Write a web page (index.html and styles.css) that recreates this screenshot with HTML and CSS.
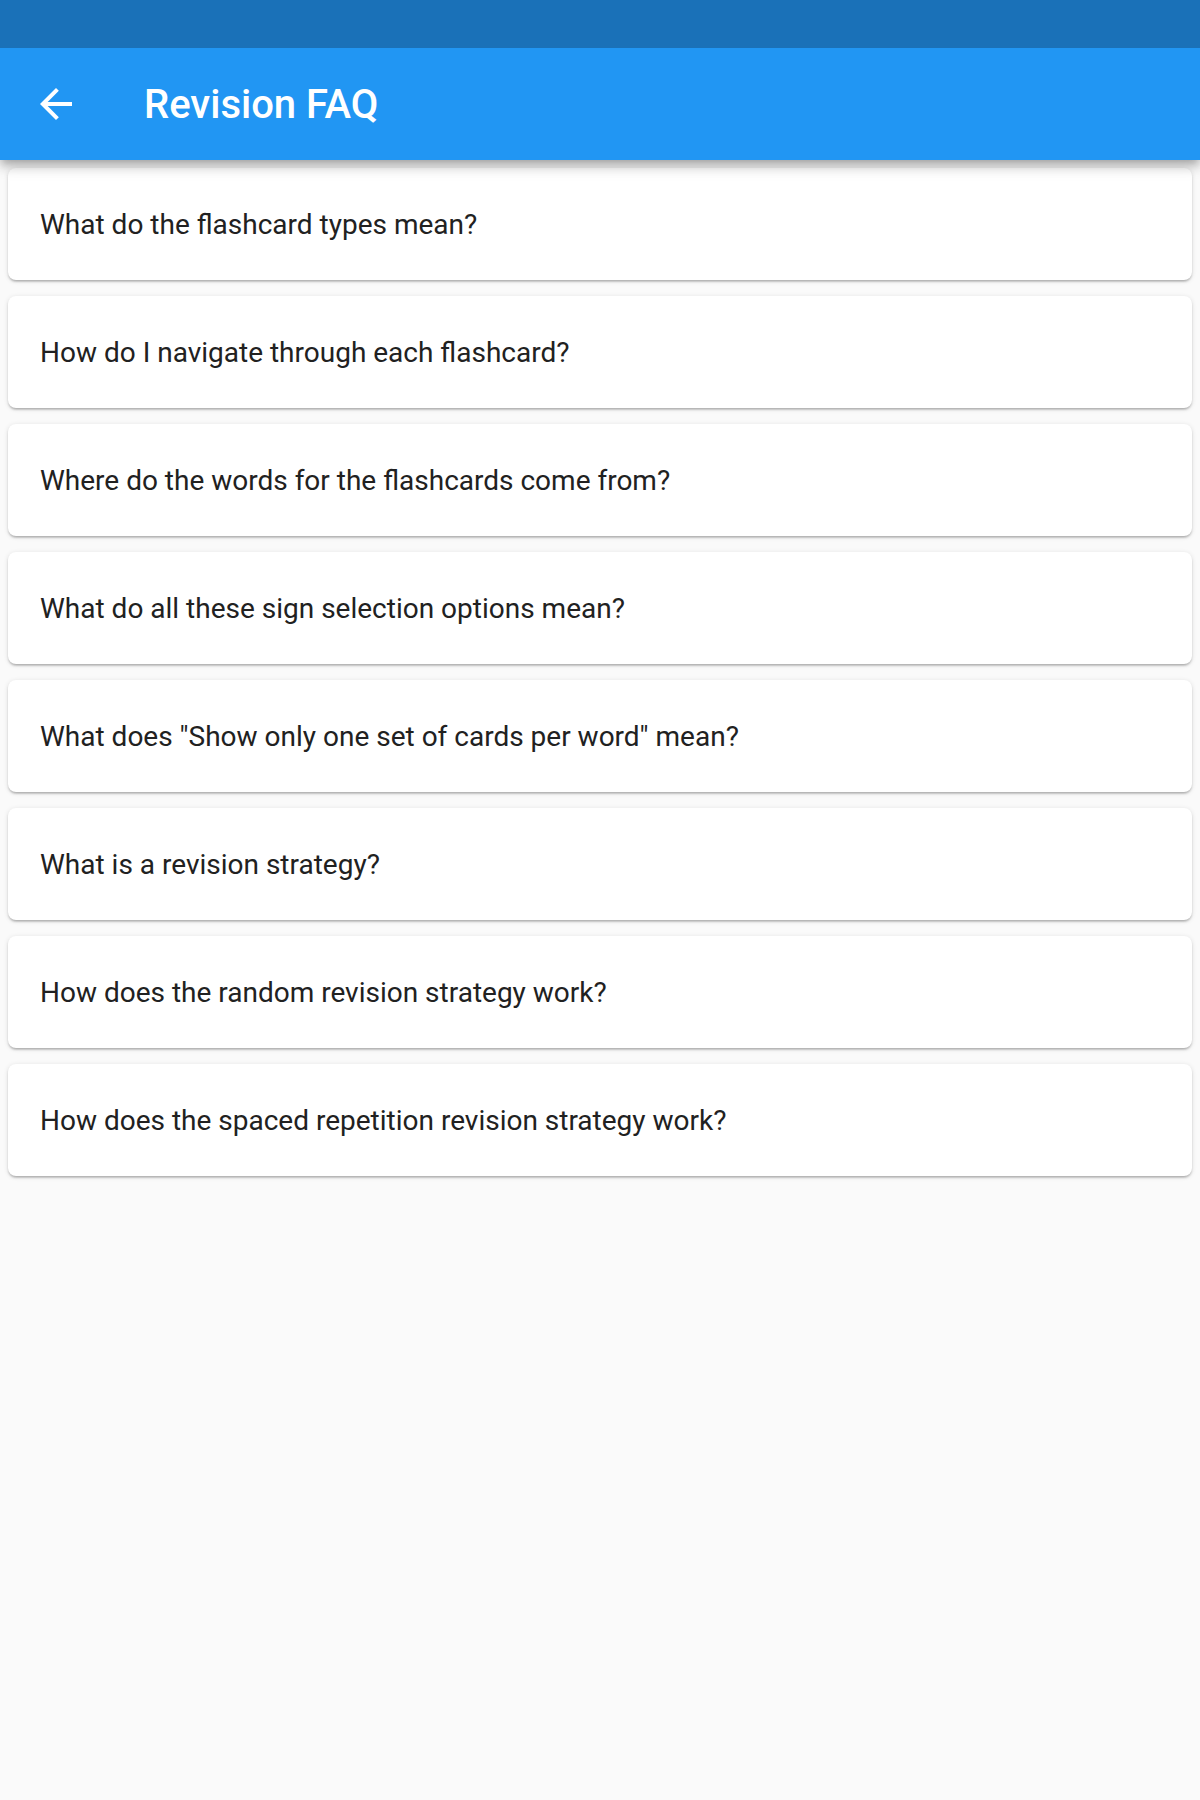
FILE: index.html
```html
<!DOCTYPE html>
<html lang="en">
<head>
<meta charset="utf-8">
<title>Revision FAQ</title>
<link rel="stylesheet" href="styles.css">
</head>
<body>
<header class="appbar">
  <div class="statusbar"></div>
  <div class="toolbar">
    <svg class="back" viewBox="0 0 24 24" width="48" height="48" aria-hidden="true">
      <path d="M20 11H7.83l5.59-5.59L12 4l-8 8 8 8 1.41-1.41L7.83 13H20v-2z" fill="#ffffff"/>
    </svg>
    <h1 class="title">Revision FAQ</h1>
  </div>
</header>
<main class="list">
  <div class="card">What do the flashcard types mean?</div>
  <div class="card">How do I navigate through each flashcard?</div>
  <div class="card">Where do the words for the flashcards come from?</div>
  <div class="card">What do all these sign selection options mean?</div>
  <div class="card">What does "Show only one set of cards per word" mean?</div>
  <div class="card">What is a revision strategy?</div>
  <div class="card">How does the random revision strategy work?</div>
  <div class="card">How does the spaced repetition revision strategy work?</div>
</main>
</body>
</html>
```
FILE: styles.css
```css
html, body {
  margin: 0;
  padding: 0;
  background: #fafafa;
  font-family: Roboto, "Noto Sans", "Liberation Sans", sans-serif;
}
body {
  min-height: 1800px;
}
.appbar {
  position: relative;
  z-index: 2;
  box-shadow: 0 4px 8px -2px rgba(0,0,0,0.2), 0 8px 10px 0 rgba(0,0,0,0.14), 0 2px 20px 0 rgba(0,0,0,0.12);
}
.statusbar {
  height: 48px;
  background: #1a71b8;
}
.toolbar {
  height: 112px;
  background: #2196f3;
  display: flex;
  align-items: center;
}
.back {
  display: block;
  margin-left: 32px;
  flex: none;
}
.title {
  margin: 0 0 0 64px;
  color: #ffffff;
  font-size: 40px;
  font-weight: 500;
}
.list {
  display: flex;
  flex-direction: column;
  gap: 16px;
  padding: 8px 8px;
}
.card {
  height: 112px;
  background: #ffffff;
  border-radius: 8px;
  box-shadow: 0 2px 2px 0 rgba(0,0,0,0.14), 0 3px 2px -2px rgba(0,0,0,0.12), 0 1px 5px 0 rgba(0,0,0,0.12);
  display: flex;
  align-items: center;
  padding-left: 32px;
  font-size: 28px;
  color: #212121;
}
```
